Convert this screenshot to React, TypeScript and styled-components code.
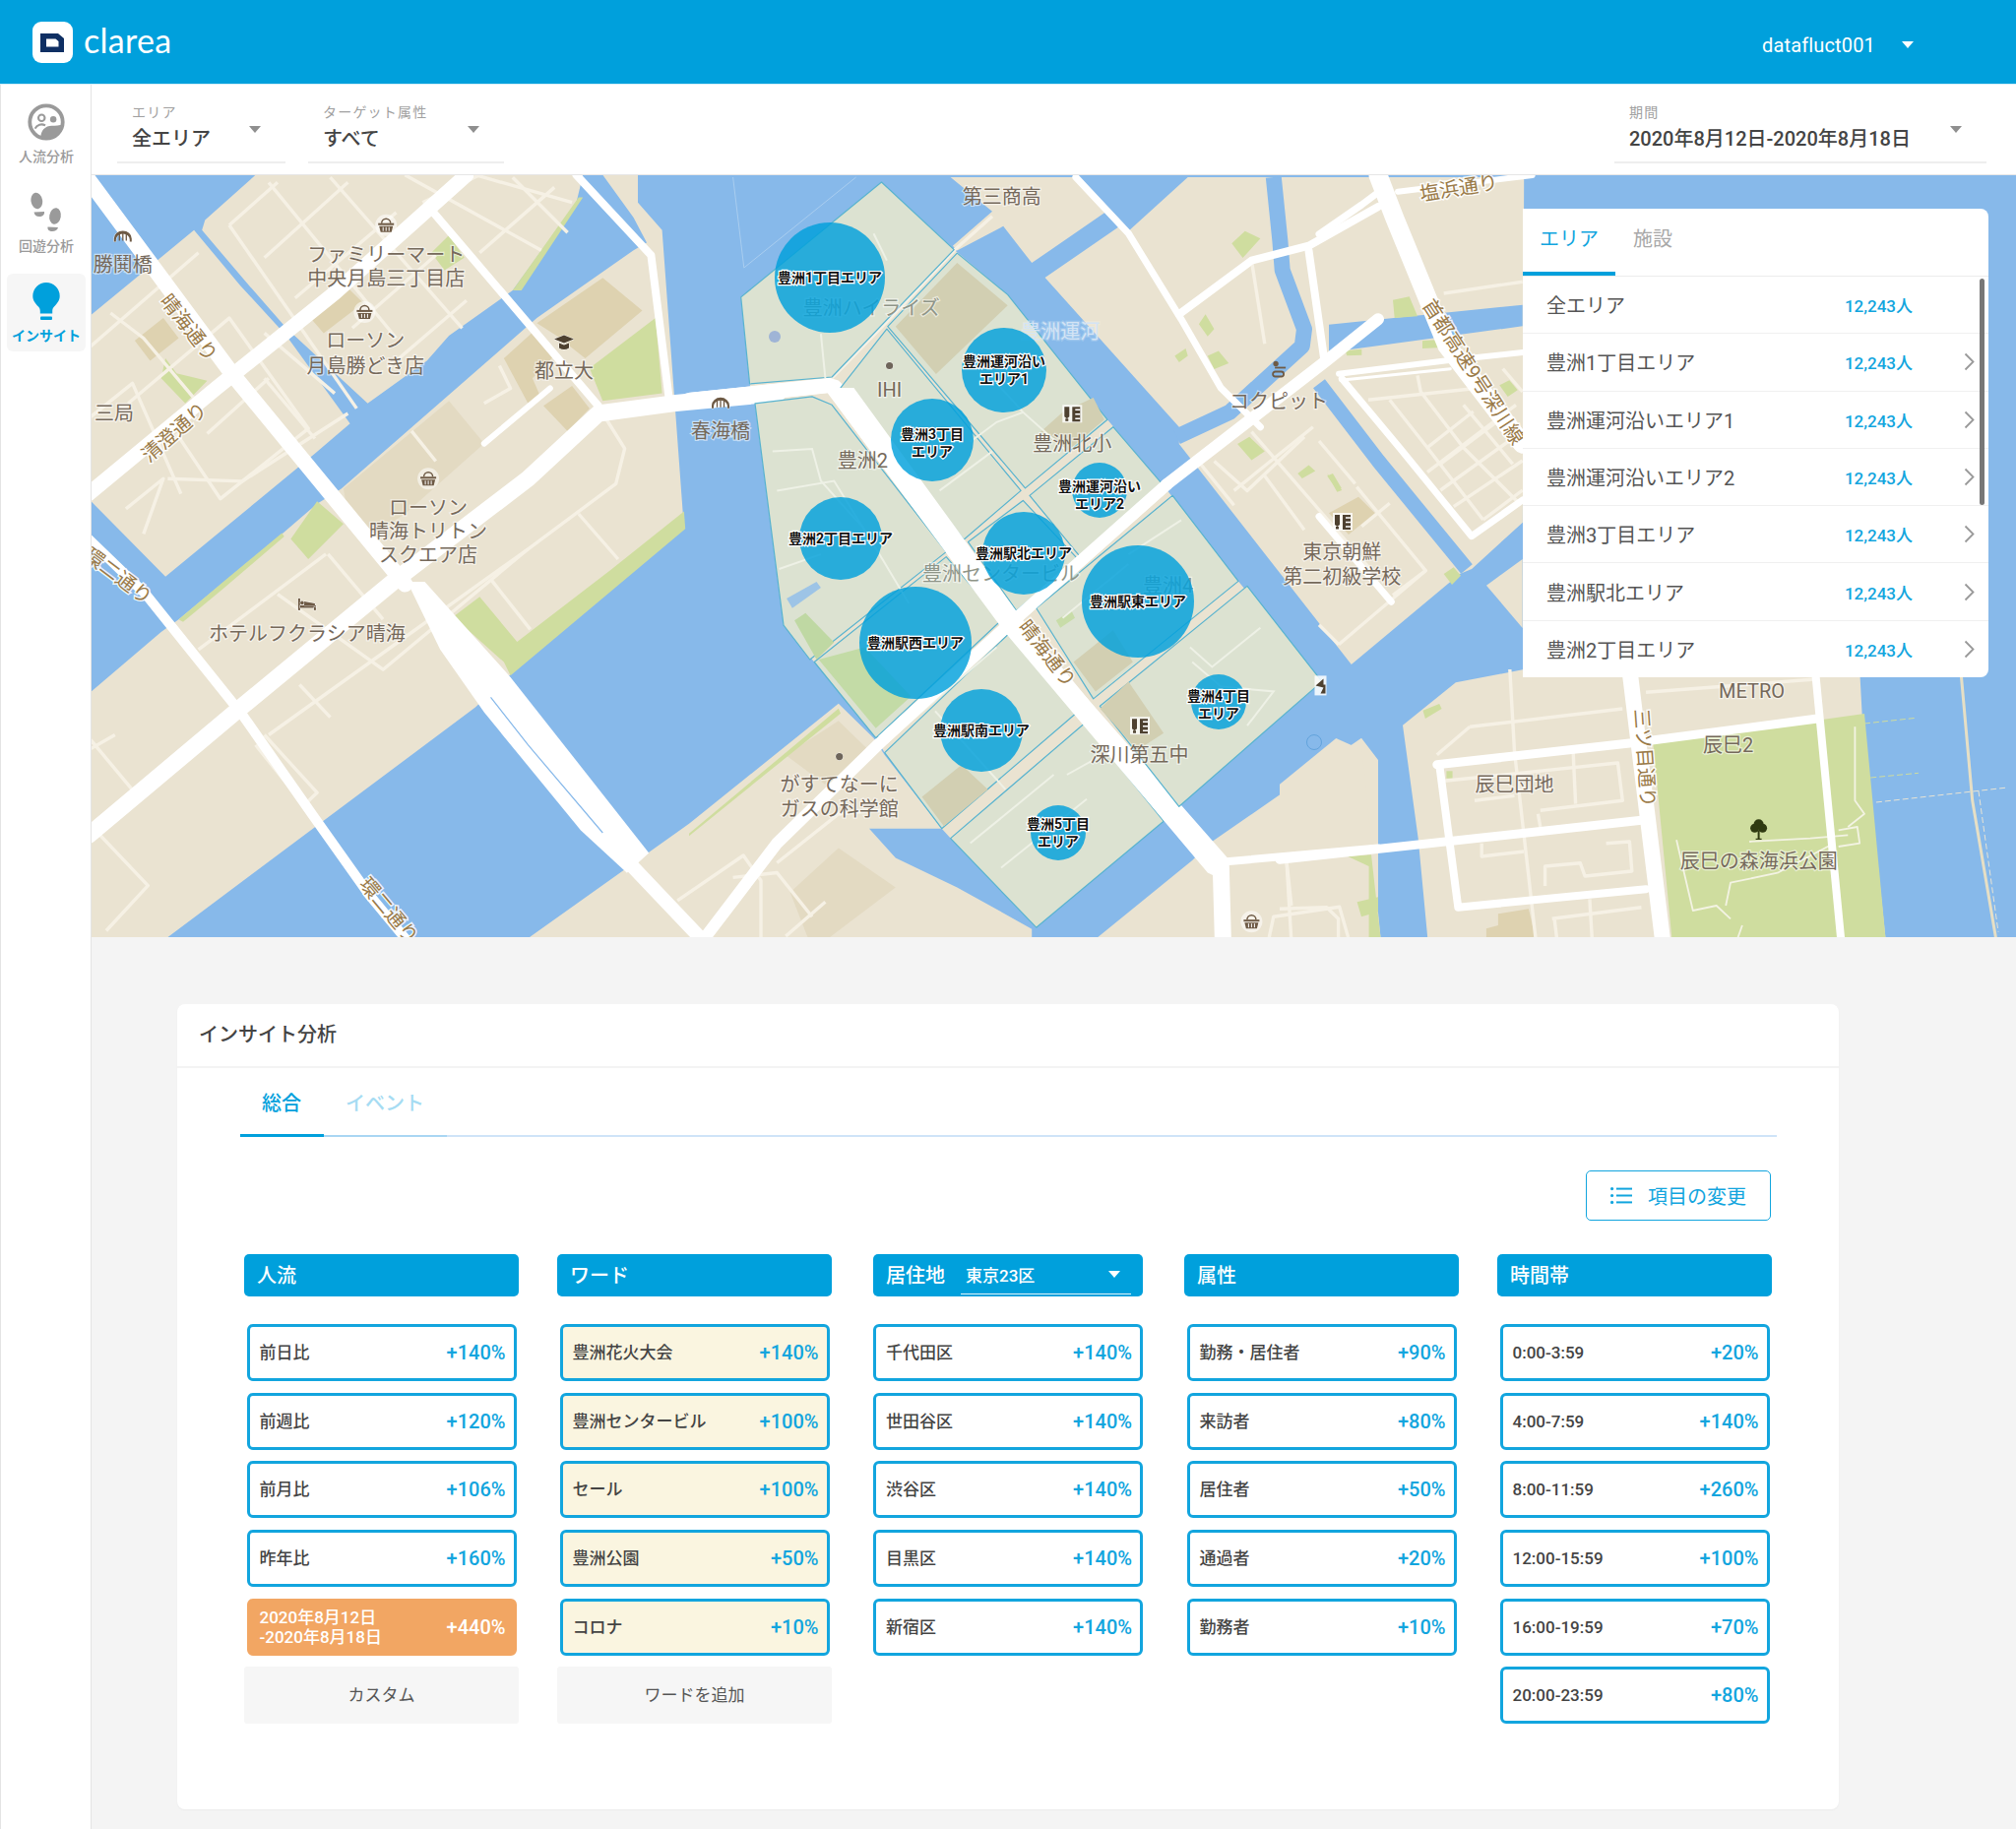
import type { FC, ReactNode } from 'react'
import styled, { createGlobalStyle } from 'styled-components'

const BLUE = '#00a0dc'
const CARD_BLUE = '#12a5de'
const FONT = `Roboto, "Noto Sans CJK JP", sans-serif`

type Frame = (x: number, y: number) => [number, number]

// map shapes were traced from crops, each list keeps the coordinates of its crop
const z3: Frame = (x, y) => [700 + x / 2.24, 180 + y / 2.01]
const z8: Frame = (x, y) => [90 + x / 2.24, 170 + y / 1.96]
const z9: Frame = (x, y) => [1300 + x / 2.096, 680 + y / 3]
const z10: Frame = (x, y) => [1340 + x / 3, 178 + y / 3]

const pts = (f: Frame, s: string) =>
	s
		.trim()
		.split(/\s+/)
		.map(p => {
			const [x, y] = p.split(',').map(Number)
			const [a, b] = f(x, y)
			return `${a.toFixed(1)},${b.toFixed(1)}`
		})
		.join(' ')

type Shape = [Frame, string]

const land: Shape[] = [
	[z8, '265,105 380,15 1125,15 1110,70 965,245 820,335 770,385 635,470 450,320 355,225 258,125'],
	[z8, '0,298 240,125 345,235 450,335 595,510 515,570 175,815 0,660'],
	[z8, '575,640 1020,300 1240,165 1270,150 1240,100 1170,15 1250,15 1250,70 1305,125 1355,720 960,1010 880,1075 180,1533 0,1533 0,1048 165,925 205,900 440,730 520,670'],
	[z3, '-363,1552 0,1320 340,1075 420,1145 445,1180 575,1330 410,1330 470,1390 610,1450 780,1535 780,1560 -363,1560'],
	[z3, '118,245 438,10 603,148 725,240 952,495 1080,630 1250,825 1440,1030 1115,1285 1080,1315 790,1532 595,1350 575,1330 445,1175 425,1145 285,990 215,915 150,462 138,422'],
	[z3, '595,0 885,0 950,70 780,175 715,100 610,150 600,140 690,70'],
	[z3, '810,205 980,100 1000,110 1135,0 1900,0 1897,705 1781,800 1754,810 1507,995 1115,545 1115,510'],
	[z3, '930,1552 1145,1395 1185,1360 1530,1145 1568,1190 1568,1552'],
	[z9, '0,350 120,210 175,245 195,525 215,820 0,820'],
	[z9, '262,170 375,40 520,0 1235,0 1240,135 1290,820 315,820 295,515'],
	[z10, '510,1250 620,1170 620,1380'],
]

const eastWater: Shape[] = [[z10, '30,455 620,395 620,460 30,540']]

const canals: Shape[] = [
	[z3, '1330,0 1345,130 1350,190 1400,310 1395,345 1230,480 1110,530'],
	[z10, '0,635 180,870 200,895 450,1200'],
]

const parks: Shape[] = [
	[z9, '795,225 1245,135 1290,820 835,820'],
	[z8, '830,895 890,855 975,945 1190,800 1355,685 1358,720 960,1012 945,985'],
	[z8, '1140,400 1290,300 1305,450 1170,465'],
	[z8, '780,170 820,135 855,180 810,205'],
	[z8, '175,380 200,410 270,425 220,470 165,420'],
	[z8, '460,740 520,665 580,710 500,780'],
	[z8, '965,245 1115,60 1125,60 985,245'],
	[z8, '205,900 300,830 440,728 445,735 305,840 215,905'],
	[z3, '0,1340 340,1085 345,1095 0,1345'],
	[z3, '1160,300 1175,280 1195,310 1180,325'],
	[z3, '1235,135 1265,110 1300,125 1260,165'],
	[z3, '1105,365 1130,350 1135,365 1115,378'],
	[z3, '1180,365 1205,355 1228,380 1195,392'],
	[z3, '1248,545 1275,530 1310,560 1280,578'],
	[z3, '1385,605 1410,588 1425,600 1395,615'],
	[z3, '1452,610 1465,605 1485,635 1475,640'],
	[z3, '1520,1480 1568,1470 1568,1500 1530,1510'],
	[z10, '225,380 275,370 300,430 230,435'],
	[z10, '315,505 375,500 375,525 315,528'],
	[z10, '80,535 130,530 130,548 85,550'],
	[z10, '550,640 580,625 605,655 575,675'],
	[z10, '380,1215 410,1195 432,1220 405,1248'],
	[z10, '25,910 45,930 70,960 55,965'],
	[z9, '355,310 368,310 368,332 355,332'],
	[z9, '305,125 340,105 345,120 310,150'],
	[z9, '145,570 195,565 215,820 190,820 190,600'],
]

const blocks: Shape[] = [
	[z8, '105,345 170,300 205,340 140,385'],
	[z8, '505,300 590,240 625,270 535,330'],
	[z8, '945,380 1015,325 1060,375 1010,420 1030,460 1000,470'],
	[z8, '1020,310 1170,220 1260,285 1130,380 1065,335'],
	[z8, '1035,475 1100,435 1140,480 1090,525'],
	[z9, '440,820 440,790 465,780 465,745 530,730 545,820'],
	[z10, '30,1030 120,980 170,1030 90,1095'],
]

const paleBlocks: Shape[] = [
	[z8, '580,640 820,465 900,550 720,690 630,740 590,690'],
	[z3, '220,1180 340,1110 420,1180 310,1240'],
	[z3, '230,1460 340,1370 470,1450 320,1552 270,1552'],
]

const toyosuAreas = [
	'118,245 438,10 603,148 325,408 138,422',
	'610,155 725,240 952,495 765,635 452,305',
	'450,310 755,640 625,740 345,430',
	'150,462 280,448 325,465 585,765 275,985 215,915',
	'965,510 1080,630 890,775 775,650',
	'760,660 885,780 745,885 635,745',
	'585,775 710,905 425,1145 285,990',
	'1100,650 1250,825 920,1065 790,880',
	'1270,835 1440,1030 1115,1285 935,1080',
	'730,930 880,1095 575,1330 445,1175',
	'900,1115 1080,1315 790,1532 595,1350',
]

const toyosuBlocks = [
	'470,305 610,175 725,262 562,402',
	'800,520 850,480 920,450 945,495 860,560',
	'875,990 965,925 1010,990 925,1050',
	'935,1085 1000,1030 1080,1135 1020,1170',
	'530,1265 620,1200 680,1250 580,1325',
]

const toyosuPaths = [
	'190,560 280,555 300,620 400,720',
	'200,640 330,620 440,780 500,870',
	'205,800 300,770',
	'300,320 310,410',
	'450,170 420,115',
	'640,540 700,500 760,480 860,560',
	'760,480 700,420',
	'570,640 690,560',
	'1140,960 1190,1000 1300,920',
	'1145,990 1210,1040 1330,1050 1270,1120',
	'710,1410 905,1270',
	'860,1220 960,1170',
	'640,1360 830,1220',
	'1000,770 1120,700',
	'850,900 1000,790',
	'480,1130 700,960',
	'560,1090 720,1250',
]

type Road = [Frame, string, number]

const roads: Road[] = [
	[z8, '0,25 330,415 720,830', 16],
	[z8, '0,650 290,440 560,250 860,15', 15],
	[z8, '0,1330 340,1080 700,820 1000,620 1160,490 1330,470 1568,450', 17],
	[z8, '780,85 1160,475', 8],
	[z8, '1110,15 1280,175 1320,455', 8],
	[z8, '0,740 130,850 350,1090 510,1290 640,1450 725,1540', 10],
	[z8, '900,550 1050,440', 6],
	[z8, '1230,1385 1420,1560', 14],
	[z3, '0,455 320,425', 15],
	[z3, '330,430 720,900 1210,1400 1215,1560', 17],
	[z3, '30,1560 200,1360 440,1150 720,920 1090,625 1450,375 1568,290', 12],
	[z3, '880,0 1000,115 1120,290 1210,430 1300,510', 7],
	[z3, '1115,280 1280,170 1410,140 1568,60', 8],
	[z3, '1410,150 1445,370', 8],
	[z10, '180,0 230,130 390,520 620,820', 19],
	[z10, '60,605 390,565 620,540', 6],
	[z10, '65,625 400,590', 3],
	[z10, '70,620 245,830 465,1100 620,990', 7],
	[z10, '0,180 130,90 190,45', 7],
	[z10, '240,50 650,0', 6],
	[z10, '0,1040 220,1300', 7],
	[z3, '1190,1400 1568,1370', 8],
	[z9, '0,580 770,460', 9],
	[z9, '745,0 815,820', 16],
	[z9, '1140,0 1150,150 1195,820', 8],
	[z9, '335,290 745,225 1145,150', 9],
	[z9, '340,290 380,725 780,670', 8],
]

type Lane = [Frame, string]

const lanes: Lane[] = [
	[z8, '320,115 430,30'],
	[z8, '320,115 610,480'],
	[z8, '400,180 590,30'],
	[z8, '470,260 700,90'],
	[z8, '600,320 790,175'],
	[z8, '680,400 860,265'],
	[z8, '760,70 890,15'],
	[z8, '890,170 1060,40'],
	[z8, '410,30 700,340'],
	[z8, '550,20 850,320'],
	[z8, '720,15 1030,165'],
	[z8, '880,15 1100,70'],
	[z8, '965,20 1090,130'],
	[z8, '50,290 125,340 250,470'],
	[z8, '0,360 250,170'],
	[z8, '90,470 320,300 500,520 300,660 200,530'],
	[z8, '0,500 100,430 210,650'],
	[z8, '85,680 170,620 125,730'],
	[z8, '270,530 410,420'],
	[z8, '400,420 515,540'],
	[z8, '180,620 350,625 590,490'],
	[z8, '400,330 560,450'],
	[z8, '60,1130 0,1160'],
	[z8, '5,1140 110,1250'],
	[z8, '40,1520 135,1430 5,1310'],
	[z8, '380,1150 490,1270 520,1245 400,1130'],
	[z8, '410,1130 1000,760 1200,630 1220,560 1170,490'],
	[z8, '350,1090 920,680'],
	[z8, '480,1030 550,1095'],
	[z8, '250,960 540,770'],
	[z8, '430,850 670,1000 1000,760'],
	[z8, '545,770 670,900'],
	[z8, '915,820 1005,920'],
	[z8, '1115,690 1205,780'],
	[z8, '1340,1460 1490,1370 1530,1420 1530,1533'],
	[z8, '935,395 960,440 900,470'],
	[z8, '735,525 790,585'],
	[z3, '200,1400 340,1300 470,1290'],
	[z3, '220,1550 310,1480'],
	[z3, '100,1430 200,1420 280,1510'],
	[z3, '1195,580 1270,640 1400,530'],
	[z3, '1280,520 1550,800'],
	[z3, '1310,610 1400,720'],
	[z3, '1240,640 1420,510'],
	[z3, '1150,570 1240,670'],
	[z3, '1320,1552 1330,1510 1480,1490 1500,1552'],
	[z3, '1360,1400 1370,1552'],
	[z3, '325,410 450,295 605,148 690,80'],
	[z3, '1280,170 1310,340'],
	[z10, '150,685 470,650'],
	[z10, '300,610 310,660 440,830 610,1000'],
	[z10, '215,685 330,830 500,1050'],
	[z10, '330,830 470,720'],
	[z10, '370,880 550,745'],
	[z10, '330,905 600,700'],
	[z10, '370,960 620,780'],
	[z10, '410,1010 620,870'],
	[z10, '500,1050 620,960'],
	[z10, '440,700 590,880'],
	[z10, '560,590 620,660'],
	[z10, '380,360 620,325'],
	[z10, '115,950 325,1205 60,1430'],
	[z10, '130,1070 215,1000'],
	[z10, '225,1280 325,1205'],
	[z10, '0,810 110,940'],
	[z10, '0,1370 60,1430'],
	[z9, '490,0 500,250 545,820'],
	[z9, '350,340 720,285 730,400 555,430'],
	[z9, '405,175 335,260'],
	[z9, '405,175 730,120'],
	[z9, '625,255 630,410'],
	[z9, '430,530 430,570 520,555'],
	[z9, '695,530 745,525 750,615 650,630 640,590 565,600 565,660'],
	[z9, '550,440 555,480'],
	[z9, '415,400 500,385'],
	[z9, '580,760 770,725'],
	[z9, '585,760 590,820'],
	[z9, '780,70 1140,30'],
	[z9, '15,590 25,720'],
	[z9, '0,730 100,725 125,760 125,820'],
	[z9, '660,700 665,820'],
]

const parkPaths: string[] = [
	'845,520 880,735 930,720 960,760',
	'950,720 960,650 1060,620 1180,530',
	'1000,525 1130,515 1210,505',
	'1225,175 1225,400 1245,440 1210,480',
	'1190,490 1230,480 1235,530 1190,540',
	'975,820 985,780',
]

type Bubble = { x: number; y: number; r: number; dy?: number; lines: string[] }

const bubbles: Bubble[] = [
	{ x: 843, y: 282, r: 56, lines: ['豊洲1丁目エリア'] },
	{ x: 1020, y: 376, r: 43, lines: ['豊洲運河沿い', 'エリア1'] },
	{ x: 947, y: 447, r: 42, dy: 3, lines: ['豊洲3丁目', 'エリア'] },
	{ x: 854, y: 547, r: 42, lines: ['豊洲2丁目エリア'] },
	{ x: 1117, y: 498, r: 28, dy: 5, lines: ['豊洲運河沿い', 'エリア2'] },
	{ x: 1040, y: 562, r: 42, lines: ['豊洲駅北エリア'] },
	{ x: 930, y: 653, r: 57, lines: ['豊洲駅西エリア'] },
	{ x: 1156, y: 611, r: 57, lines: ['豊洲駅東エリア'] },
	{ x: 997, y: 742, r: 42, lines: ['豊洲駅南エリア'] },
	{ x: 1238, y: 713, r: 28, dy: 3, lines: ['豊洲4丁目', 'エリア'] },
	{ x: 1075, y: 846, r: 28, lines: ['豊洲5丁目', 'エリア'] },
]

type PlaceName = { f: Frame; x: number; y: number; t: string; soft?: boolean; faint?: boolean }

const places: PlaceName[] = [
	{ f: z8, x: 78, y: 195, t: '勝鬨橋' },
	{ f: z8, x: 677, y: 175, t: 'ファミリーマート' },
	{ f: z8, x: 677, y: 222, t: '中央月島三丁目店' },
	{ f: z8, x: 630, y: 345, t: 'ローソン' },
	{ f: z8, x: 630, y: 395, t: '月島勝どき店' },
	{ f: z8, x: 1082, y: 405, t: '都立大' },
	{ f: z8, x: 58, y: 490, t: '三局' },
	{ f: z8, x: 1438, y: 525, t: '春海橋' },
	{ f: z8, x: 773, y: 678, t: 'ローソン' },
	{ f: z8, x: 773, y: 726, t: '晴海トリトン' },
	{ f: z8, x: 773, y: 773, t: 'スクエア店' },
	{ f: z8, x: 497, y: 930, t: 'ホテルフクラシア晴海' },
	{ f: z3, x: 712, y: 40, t: '第三商高' },
	{ f: z3, x: 415, y: 268, t: '豊洲ハイライズ', soft: true },
	{ f: z3, x: 845, y: 315, t: '豊洲運河', faint: true },
	{ f: z3, x: 456, y: 435, t: 'IHI' },
	{ f: z3, x: 872, y: 545, t: '豊洲北小' },
	{ f: z3, x: 395, y: 578, t: '豊洲2' },
	{ f: z3, x: 710, y: 810, t: '豊洲センタービル', soft: true },
	{ f: z3, x: 1090, y: 835, t: '豊洲4', soft: true },
	{ f: z3, x: 1025, y: 1180, t: '深川第五中' },
	{ f: z3, x: 342, y: 1240, t: 'がすてなーに' },
	{ f: z3, x: 342, y: 1290, t: 'ガスの科学館' },
	{ f: z3, x: 1342, y: 458, t: 'コクピット' },
	{ f: z10, x: 70, y: 1150, t: '東京朝鮮' },
	{ f: z10, x: 70, y: 1224, t: '第二初級学校' },
	{ f: z9, x: 1005, y: 67, t: 'METRO' },
	{ f: z9, x: 955, y: 230, t: '辰巳2' },
	{ f: z9, x: 500, y: 350, t: '辰巳団地' },
	{ f: z9, x: 1020, y: 585, t: '辰巳の森海浜公園' },
]

const roadNames: { x: number; y: number; a: number; t: string; start?: boolean }[] = [
	{ x: 192, y: 333, a: 52, t: '晴海通り' },
	{ x: 177, y: 439, a: -41, t: '清澄通り' },
	{ x: 120, y: 585, a: 37, t: '環二通り' },
	{ x: 395, y: 925, a: 50, t: '環二通り' },
	{ x: 1064, y: 664, a: 52, t: '晴海通り' },
	{ x: 1482, y: 191, a: -9, t: '塩浜通り' },
	{ x: 1671, y: 770, a: 86, t: '三ツ目通り' },
	{ x: 1450, y: 306, a: 57, t: '首都高速9号深川線', start: true },
]

const GlobalStyle = createGlobalStyle`
	html, body {
		margin: 0;
		padding: 0;
		width: 2048px;
		height: 1858px;
		overflow: hidden;
		background: #f4f4f4;
		font-family: ${FONT};
	}
`

const Page = styled.div`
	width: 2048px;
	height: 1858px;
	display: flex;
	flex-direction: column;
`

const Header = styled.header`
	height: 86px;
	flex: none;
	display: flex;
	align-items: center;
	background: ${BLUE};
	border-bottom: 1px solid #d5eef8;
	padding: 0 104px 0 33px;
	box-sizing: border-box;
`

const LogoMark = styled.svg`
	width: 41px;
	height: 42px;
	display: block;
`

const LogoText = styled.span`
	margin: -3px 0 0 11px;
	font-family: Lato, sans-serif;
	font-size: 34px;
	font-weight: 400;
	letter-spacing: 0.3px;
	line-height: 42px;
	color: #fff;
`

const UserMenu = styled.div`
	margin-left: auto;
	padding-top: 6px;
	display: flex;
	align-items: center;
	gap: 27px;
	color: #fff;
	font-size: 20px;
	letter-spacing: 0.15px;
`

const Caret = styled.span<{ $color?: string }>`
	display: inline-block;
	width: 0;
	height: 0;
	flex: none;
	border-left: 6.5px solid transparent;
	border-right: 6.5px solid transparent;
	border-top: 7px solid ${p => p.$color ?? '#8f8f8f'};
`

const Body = styled.div`
	flex: 1;
	display: flex;
	min-height: 0;
`

const Sidebar = styled.nav`
	width: 93px;
	flex: none;
	box-sizing: border-box;
	background: #fff;
	border-left: 1px solid #e4e4e4;
	border-right: 1px solid #e4e4e4;
	padding: 10px 5px 0 6px;
	display: flex;
	flex-direction: column;
	gap: 12px;
`

const SideItem = styled.div<{ $active?: boolean }>`
	height: 79px;
	box-sizing: border-box;
	padding-top: 9px;
	border-radius: 6px;
	display: flex;
	flex-direction: column;
	align-items: center;
	background: ${p => (p.$active ? '#f6f6f6' : 'transparent')};
`

const SideIcon = styled.div`
	height: 38px;
	display: flex;
	align-items: center;
	justify-content: center;
`

const SideLabel = styled.span<{ $active?: boolean }>`
	margin-top: 8px;
	font-size: 14px;
	line-height: 16px;
	white-space: nowrap;
	font-weight: ${p => (p.$active ? 700 : 500)};
	color: ${p => (p.$active ? BLUE : '#9a9a9a')};
`

const Main = styled.main`
	flex: 1;
	min-width: 0;
	display: flex;
	flex-direction: column;
	background: #f4f4f4;
`

const Toolbar = styled.div`
	height: 91px;
	flex: none;
	box-sizing: content-box;
	display: flex;
	background: #fff;
	border-bottom: 1px solid #e6e6e6;
	padding-left: 26px;
	padding-right: 30px;
	gap: 23px;
`

const Filter = styled.div<{ $w: number; $push?: boolean }>`
	width: ${p => p.$w}px;
	height: 61px;
	margin-top: 19px;
	margin-left: ${p => (p.$push ? 'auto' : 0)};
	box-sizing: border-box;
	padding: 0 25px 0 15px;
	border-bottom: 2px solid #eeeeee;
	display: flex;
	justify-content: space-between;
`

const FilterLabel = styled.div`
	font-size: 14px;
	line-height: 18px;
	letter-spacing: 1.2px;
	color: #a0a0a0;
`

const FilterValue = styled.div`
	font-size: 20px;
	line-height: 30px;
	font-weight: 500;
	color: #444;
	margin-top: 3px;
	white-space: nowrap;
`

const FilterCaret = styled(Caret)`
	margin-top: 23px;
`

const MapArea = styled.section`
	position: relative;
	height: 774px;
	flex: none;
	overflow: hidden;
`

const MapSvg = styled.svg`
	display: block;
	width: 1955px;
	height: 774px;
`

const PlaceText = styled.text<{ $fill?: string; $halo?: string }>`
	font-family: ${FONT};
	font-size: 20px;
	text-anchor: middle;
	fill: ${p => p.$fill ?? '#75695b'};
	stroke: ${p => p.$halo ?? 'rgba(255, 255, 255, 0.55)'};
	stroke-width: 2.5px;
	paint-order: stroke;
`

const RoadText = styled.text`
	font-family: ${FONT};
	font-size: 20px;
	fill: #9a7a48;
	stroke: rgba(255, 255, 255, 0.85);
	stroke-width: 3px;
	paint-order: stroke;
`

const BubbleText = styled.text`
	font-family: ${FONT};
	font-size: 14px;
	font-weight: 700;
	text-anchor: middle;
	fill: #111;
	stroke: #fff;
	stroke-width: 2.5px;
	paint-order: stroke;
`

const AreaPanel = styled.aside`
	position: absolute;
	top: 34px;
	right: 28px;
	width: 473px;
	height: 476px;
	background: #fff;
	border-radius: 0 8px 8px 0;
	overflow: hidden;
`

const PanelTabs = styled.div`
	height: 68px;
	display: flex;
	border-bottom: 1px solid #ececec;
`

const PanelTab = styled.div<{ $active?: boolean }>`
	height: 68px;
	box-sizing: border-box;
	padding-top: 16px;
	font-size: 20px;
	line-height: 30px;
	text-align: center;
	width: ${p => (p.$active ? '94px' : 'auto')};
	margin-left: ${p => (p.$active ? 0 : '18px')};
	color: ${p => (p.$active ? '#12a5de' : '#a8a8a8')};
	border-bottom: ${p => (p.$active ? `4px solid ${BLUE}` : 'none')};
`

const AreaList = styled.div`
	position: relative;
`

const AreaRow = styled.div`
	height: 58.3px;
	box-sizing: border-box;
	display: flex;
	align-items: center;
	padding-left: 24px;
	border-bottom: 1.5px solid #f0f0f0;
`

const AreaName = styled.span`
	flex: 1;
	font-size: 20px;
	color: #555;
`

const AreaCount = styled.span`
	width: 70px;
	text-align: right;
	font-size: 17px;
	font-weight: 500;
	color: ${CARD_BLUE};
`

const AreaChevron = styled.span`
	width: 77px;
	flex: none;
	display: flex;
	padding-left: 52px;
	box-sizing: border-box;
`

const ScrollThumb = styled.div`
	position: absolute;
	top: 2px;
	right: 4px;
	width: 5px;
	height: 230px;
	border-radius: 3px;
	background: #777;
`

const Content = styled.div`
	margin: 68px 0 0 87px;
	width: 1688px;
	height: 818px;
	background: #fff;
	border-radius: 8px;
	box-shadow: 0 1px 2px rgba(0, 0, 0, 0.04);
	flex: none;
`

const PanelTitle = styled.div`
	height: 65px;
	box-sizing: border-box;
	padding-left: 22px;
	border-bottom: 2px solid #f3f3f3;
	font-size: 20px;
	font-weight: 500;
	line-height: 63px;
	color: #444;
`

const TabBar = styled.div`
	margin-left: 63.5px;
	width: 1561.5px;
	height: 70px;
	box-sizing: border-box;
	display: flex;
	border-bottom: 2px solid #cfe4f8;
`

const ViewTab = styled.div<{ $active?: boolean }>`
	width: ${p => (p.$active ? 85 : 125)}px;
	height: 70px;
	box-sizing: border-box;
	text-align: center;
	font-size: 20px;
	font-weight: 500;
	line-height: 72px;
	color: ${p => (p.$active ? BLUE : '#a6dcf3')};
	border-bottom: ${p => (p.$active ? `3px solid ${BLUE}` : '2px solid #a9d6f3')};
`

const ActionRow = styled.div`
	margin-top: 34px;
	padding-right: 69px;
	display: flex;
	justify-content: flex-end;
`

const OutlineButton = styled.div`
	width: 188px;
	height: 51px;
	box-sizing: border-box;
	border: 1.5px solid ${CARD_BLUE};
	border-radius: 5px;
	display: flex;
	align-items: center;
	justify-content: center;
	gap: 16px;
	font-size: 20px;
	color: ${CARD_BLUE};
`

const Columns = styled.div`
	margin: 34px 0 0 68px;
	display: flex;
	gap: 39px;
`

const Column = styled.div<{ $narrow?: boolean }>`
	width: ${p => (p.$narrow ? 274 : 279)}px;
	margin: ${p => (p.$narrow ? '0 3px' : 0)};
	flex: none;
`

const ColumnHead = styled.div`
	height: 43px;
	box-sizing: border-box;
	background: ${BLUE};
	border-radius: 5px;
	padding: 0 0 2px 13px;
	display: flex;
	align-items: center;
	color: #fff;
	font-size: 20px;
	font-weight: 500;
`

const HeadSelect = styled.div`
	margin: 2px 0 0 16px;
	width: 173px;
	height: 38px;
	box-sizing: border-box;
	padding: 0 11px 2px 5px;
	border-bottom: 1.5px solid #e3f4fb;
	display: flex;
	align-items: center;
	justify-content: space-between;
	font-size: 17px;
`

const Stack = styled.div`
	margin-top: 28px;
	display: flex;
	flex-direction: column;
	align-items: center;
	gap: 11.7px;
`

const Card = styled.div<{ $tone?: 'word' | 'date' }>`
	width: 274px;
	height: 58px;
	box-sizing: border-box;
	border-radius: 6px;
	padding: 0 8px 0 10px;
	display: flex;
	align-items: center;
	justify-content: space-between;
	border: 3px solid ${p => (p.$tone === 'date' ? '#f2a663' : CARD_BLUE)};
	background: ${p => (p.$tone === 'word' ? '#faf5e0' : p.$tone === 'date' ? '#f2a663' : '#fff')};
`

const CardName = styled.span<{ $light?: boolean }>`
	font-size: 17px;
	line-height: 20px;
	font-weight: 500;
	white-space: pre-line;
	color: ${p => (p.$light ? '#fff' : '#444')};
`

const CardValue = styled.span<{ $light?: boolean }>`
	font-size: 20px;
	font-weight: 500;
	color: ${p => (p.$light ? '#fff' : CARD_BLUE)};
`

const AddButton = styled.div`
	width: 279px;
	height: 58px;
	border-radius: 3px;
	background: #f6f6f6;
	display: flex;
	align-items: center;
	justify-content: center;
	padding-bottom: 3px;
	box-sizing: border-box;
	font-size: 17px;
	color: #555;
`

const Polys: FC<{ list: Shape[]; fill: string }> = ({ list, fill }) => (
	<g fill={fill}>
		{list.map(([f, s], i) => (
			<polygon key={i} points={pts(f, s)} />
		))}
	</g>
)

const ICON = '#6e5a45'

const At: FC<{ f: Frame; x: number; y: number; children: ReactNode }> = ({ f, x, y, children }) => {
	const [a, b] = f(x, y)
	return <g transform={`translate(${a.toFixed(1)} ${b.toFixed(1)})`}>{children}</g>
}

const BasketIcon: FC = () => (
	<g>
		<circle r="11" fill="#fff" opacity="0.55" />
		<path d="M-4.5 -2 A4.5 4.5 0 0 1 4.5 -2" fill="none" stroke={ICON} strokeWidth="1.5" />
		<rect x="-8" y="-2" width="16" height="2" fill={ICON} />
		<path d="M-7 1 H7 L5.5 7 H-5.5 Z" fill={ICON} />
		<path d="M-3 2 V6 M0 2 V6 M3 2 V6" stroke="#fff" strokeWidth="1" />
	</g>
)

const BridgeIcon: FC = () => (
	<g>
		<path d="M-9 5 V2 A9 8 0 0 1 9 2 V5 H7 V3 A7 6 0 0 0 -7 3 V5 Z" fill={ICON} stroke="#fff" strokeWidth="0.8" paintOrder="stroke" />
		<path d="M-3.5 -3 V4 M0 -4 V4 M3.5 -3 V4" stroke={ICON} strokeWidth="1.3" />
	</g>
)

const SchoolIcon: FC = () => (
	<g>
		<rect x="-10" y="-9" width="20" height="18" fill="#fff" opacity="0.8" />
		<path d="M-8 -7 H-3 V3 L-5.5 5 L-8 3 Z" fill="#4e4130" />
		<rect x="-7" y="5" width="3" height="2.5" fill="#4e4130" />
		<path d="M0 -7 H8 V8 H0 Z" fill="#4e4130" />
		<path d="M3 -4 H8 M3 0.5 H8 M3 5 H8" stroke="#fff" strokeWidth="1.4" />
	</g>
)

const GradIcon: FC = () => (
	<g fill="#4e4130" stroke="#fff" strokeWidth="1" paintOrder="stroke">
		<path d="M-10 -3 L0 -7 L10 -3 L0 1 Z" />
		<path d="M-5 1 L0 3 L5 1 V6 Q0 9 -5 6 Z" />
	</g>
)

const BedIcon: FC = () => (
	<g fill={ICON} stroke="#fff" strokeWidth="0.8" paintOrder="stroke">
		<rect x="-9" y="-6" width="2" height="12" />
		<rect x="-7" y="1" width="16" height="2.6" />
		<rect x="7" y="3" width="2" height="3" />
		<path d="M-3 -3 L8 -1 V1 H-3 Z" />
		<circle cx="-5" cy="-1.5" r="1.8" />
	</g>
)

const TreeIcon: FC = () => (
	<g fill="#2f3a10">
		<circle cx="0" cy="-6" r="5" />
		<circle cx="-4" cy="-2" r="4.5" />
		<circle cx="4" cy="-2" r="4.5" />
		<rect x="-1" y="0" width="2" height="9" />
		<rect x="-3" y="8.5" width="6" height="1.2" />
	</g>
)

const CockpitIcon: FC = () => (
	<g fill="none" stroke={ICON} strokeWidth="1.8">
		<circle cx="-3" cy="-7" r="1.8" fill={ICON} />
		<path d="M-4 -3 H7" />
		<rect x="-6" y="1" width="11" height="5" rx="2.5" />
	</g>
)

const PierIcon: FC = () => (
	<g>
		<rect x="-6" y="-10" width="12" height="20" fill="#fff" opacity="0.85" />
		<path d="M-5 0 L3 -7 V-1 L5 -1 V8 H0 L3 2 Z" fill="#4e4130" />
	</g>
)

const MapDot: FC<{ f: Frame; x: number; y: number }> = ({ f, x, y }) => (
	<At f={f} x={x} y={y}>
		<circle r="3.6" fill="#6e655a" stroke="#fff" strokeWidth="1" paintOrder="stroke" />
	</At>
)

const AreaMap: FC = () => (
	<MapSvg viewBox="93 178 1955 774">
		<rect x="93" y="178" width="1955" height="774" fill="#87b9ea" />
		<Polys list={land} fill="#eae3d1" />
		<Polys list={eastWater} fill="#87b9ea" />
		<g fill="none" stroke="#87b9ea" strokeLinejoin="round">
			{canals.map(([f, s], i) => (
				<polyline key={i} points={pts(f, s)} strokeWidth={i === 0 ? 16 : 15} />
			))}
		</g>
		<Polys list={paleBlocks} fill="#e3dac2" />
		<Polys list={blocks} fill="#ded2b0" />
		<Polys list={parks} fill="#cfdd9f" />
		<g fill="none" stroke="#f6f1e5" strokeWidth="3.4" strokeLinejoin="round">
			{lanes.map(([f, s], i) => (
				<polyline key={i} points={pts(f, s)} />
			))}
		</g>
		<g fill="none" stroke="#f3f3e3" strokeWidth="1.8" strokeLinejoin="round">
			{parkPaths.map((s, i) => (
				<polyline key={i} points={pts(z9, s)} />
			))}
		</g>
		<polyline points={pts(z9, '1450,0 1475,400 1525,820')} fill="none" stroke="#e6dfc5" strokeWidth="3" />
		<g fill="none" stroke="#cfdd9f" strokeWidth="1" strokeDasharray="6 3">
			<polyline points={pts(z9, '1245,165 1355,148')} />
			<polyline points={pts(z9, '1258,330 1360,316')} />
		</g>
		<g fill="none" stroke="#e8e4d5" strokeWidth="1" strokeDasharray="6 3">
			<polyline points={pts(z9, '1270,405 1550,360')} />
			<polyline points={pts(z9, '1488,370 1530,800')} />
		</g>
		<polyline points={pts(z3, '100,0 125,185 380,0')} fill="none" stroke="#a9cdef" strokeWidth="1" />
		<g fill="none" stroke="#fff" strokeLinejoin="round" strokeLinecap="round">
			{roads.map(([f, s, w], i) => (
				<polyline key={i} points={pts(f, s)} strokeWidth={w} />
			))}
		</g>
		<polygon points={pts(z8, '725,825 765,825 960,1015 1275,1365 1225,1405 1120,1320 900,1085 800,960')} fill="#fff" />
		<polyline points={pts(z8, '915,1055 1000,1150 1170,1325')} fill="none" stroke="#87b9ea" strokeWidth="1.2" />
		<g fill="#dce2d1" stroke="#58b3cf" strokeWidth="1.2" strokeLinejoin="round">
			{toyosuAreas.map((s, i) => (
				<polygon key={i} points={pts(z3, s)} />
			))}
		</g>
		<g fill="#d2cfb2">
			{toyosuBlocks.map((s, i) => (
				<polygon key={i} points={pts(z3, s)} />
			))}
		</g>
		<polygon points={pts(z3, '240,905 265,890 330,950 290,985')} fill="#bfd8a3" />
		<polygon points={pts(z3, '295,985 400,960 505,1060 425,1125')} fill="#c3dba6" />
		<polygon points={pts(z3, '835,905 870,885 878,900 845,920')} fill="#c8dca8" />
		<g fill="none" stroke="#eef1e6" strokeWidth="2">
			{toyosuPaths.map((s, i) => (
				<polyline key={i} points={pts(z3, s)} />
			))}
		</g>
		<polygon points={pts(z3, '222,860 290,826 300,838 235,880')} fill="#9dc4e6" />
		<polygon points={pts(z3, '330,430 375,430 760,905 1215,1400 1215,1435 1180,1420 715,925 340,470')} fill="#fff" />
		<polyline points={pts(z3, '440,1150 720,920 1090,625')} fill="none" stroke="#fff" strokeWidth="12" />
		<polyline points={pts(z3, '0,455 325,425')} fill="none" stroke="#fff" strokeWidth="15" />
		<circle cx="787" cy="342" r="6" fill="#9fb4d6" />
		<circle cx="1335" cy="754" r="7.5" fill="none" stroke="#62a3dc" strokeWidth="1" />

		{places.map(({ f, x, y, t, soft, faint }, i) => {
			const [a, b] = f(x, y)
			return (
				<PlaceText
					key={i}
					x={a}
					y={b + 7}
					$fill={faint ? '#d4e4f5' : soft ? '#8f9588' : undefined}
					$halo={faint ? 'rgba(255,255,255,0.2)' : undefined}
				>
					{t}
				</PlaceText>
			)
		})}
		{roadNames.map(({ x, y, a, t, start }, i) => (
			<RoadText key={i} x={x} y={y + 7} textAnchor={start ? 'start' : 'middle'} transform={`rotate(${a} ${x} ${y})`}>
				{t}
			</RoadText>
		))}

		<At f={z8} x={677} y={115}><BasketIcon /></At>
		<At f={z8} x={628} y={288}><BasketIcon /></At>
		<At f={z8} x={773} y={620}><BasketIcon /></At>
		<At f={z3} x={1280} y={1520}><BasketIcon /></At>
		<At f={z8} x={1082} y={348}><GradIcon /></At>
		<At f={z8} x={497} y={870}><BedIcon /></At>
		<At f={z8} x={78} y={138}><BridgeIcon /></At>
		<At f={z8} x={1438} y={470}><BridgeIcon /></At>
		<At f={z3} x={872} y={483}><SchoolIcon /></At>
		<At f={z3} x={1026} y={1120}><SchoolIcon /></At>
		<At f={z10} x={72} y={1056}><SchoolIcon /></At>
		<At f={z9} x={1020} y={490}><TreeIcon /></At>
		<At f={z3} x={1342} y={395}><CockpitIcon /></At>
		<At f={z3} x={1437} y={1038}><PierIcon /></At>
		<MapDot f={z3} x={456} y={385} />
		<MapDot f={z3} x={342} y={1183} />

		{bubbles.map(b => (
			<circle key={b.lines.join()} cx={b.x} cy={b.y} r={b.r} fill="#00a0dc" fillOpacity="0.82" />
		))}
		{bubbles.map(b =>
			b.lines.map((line, i) => (
				<BubbleText key={line + b.x} x={b.x} y={b.y + 5 + (b.dy ?? 0) + (i - (b.lines.length - 1) / 2) * 18}>
					{line}
				</BubbleText>
			)),
		)}
	</MapSvg>
)

const areaRows = ['全エリア', '豊洲1丁目エリア', '豊洲運河沿いエリア1', '豊洲運河沿いエリア2', '豊洲3丁目エリア', '豊洲駅北エリア', '豊洲2丁目エリア']

const flowRows = [
	['前日比', '+140%'],
	['前週比', '+120%'],
	['前月比', '+106%'],
	['昨年比', '+160%'],
]
const wordRows = [
	['豊洲花火大会', '+140%'],
	['豊洲センタービル', '+100%'],
	['セール', '+100%'],
	['豊洲公園', '+50%'],
	['コロナ', '+10%'],
]
const homeRows = [
	['千代田区', '+140%'],
	['世田谷区', '+140%'],
	['渋谷区', '+140%'],
	['目黒区', '+140%'],
	['新宿区', '+140%'],
]
const attrRows = [
	['勤務・居住者', '+90%'],
	['来訪者', '+80%'],
	['居住者', '+50%'],
	['通過者', '+20%'],
	['勤務者', '+10%'],
]
const timeRows = [
	['0:00-3:59', '+20%'],
	['4:00-7:59', '+140%'],
	['8:00-11:59', '+260%'],
	['12:00-15:59', '+100%'],
	['16:00-19:59', '+70%'],
	['20:00-23:59', '+80%'],
]

const Cards: FC<{ rows: string[][]; tone?: 'word' }> = ({ rows, tone }) => (
	<>
		{rows.map(([name, value]) => (
			<Card key={name} $tone={tone}>
				<CardName>{name}</CardName>
				<CardValue>{value}</CardValue>
			</Card>
		))}
	</>
)

export default function App() {
	return (
		<Page>
			<GlobalStyle />
			<Header>
				<LogoMark viewBox="0 0 41 42">
					<rect width="41" height="42" rx="9" fill="#fff" />
					<path fillRule="evenodd" d="M8 12 H26 L32 17 V31 H8 Z M14 17.5 H23.5 L26.5 20 V25.5 H14 Z" fill="#0f2f63" />
				</LogoMark>
				<LogoText>clarea</LogoText>
				<UserMenu>
					datafluct001
					<Caret $color="#fff" />
				</UserMenu>
			</Header>
			<Body>
				<Sidebar>
					<SideItem>
						<SideIcon>
							<svg width="38" height="38" viewBox="0 0 40 40">
								<circle cx="20" cy="20" r="17.6" fill="none" stroke="#9a9a9a" strokeWidth="4" />
								<circle cx="15" cy="15.5" r="3.4" fill="none" stroke="#9a9a9a" strokeWidth="2.2" />
								<circle cx="27.5" cy="17" r="3.4" fill="#9a9a9a" />
								<path d="M8 27 C10 22.5 15 21.5 19 23.5" fill="none" stroke="#9a9a9a" strokeWidth="2.2" />
								<path d="M14 37 C14 29 19 24 26 24 C30 24 34 23.5 38 22 A18 18 0 0 1 14 37 Z" fill="#9a9a9a" />
							</svg>
						</SideIcon>
						<SideLabel>人流分析</SideLabel>
					</SideItem>
					<SideItem>
						<SideIcon>
							<svg width="34" height="40" viewBox="0 0 34 40" fill="#9a9a9a">
								<ellipse cx="7.3" cy="9" rx="5.8" ry="8.3" transform="rotate(-10 7.3 9)" />
								<path d="M4.5 20.5 L15 20 C15.5 23.5 13 25 10 25 C7 25 5 23.5 4.5 20.5 Z" />
								<ellipse cx="26" cy="24.5" rx="5.8" ry="8.3" transform="rotate(10 26 24.5)" />
								<path d="M18.5 35.5 L29 36 C28.5 38.5 26 40 23 40 C20 40 18 38.5 18.5 35.5 Z" />
							</svg>
						</SideIcon>
						<SideLabel>回遊分析</SideLabel>
					</SideItem>
					<SideItem $active>
						<SideIcon>
							<svg width="28" height="38" viewBox="0 0 28 38" fill={BLUE}>
								<path d="M14 0 A13.7 13.7 0 0 0 0.3 13.7 C0.3 18.5 3.2 21.5 6 24.5 C7.2 25.8 7.8 27.2 7.8 29 V31.5 H20.2 V29 C20.2 27.2 20.8 25.8 22 24.5 C24.8 21.5 27.7 18.5 27.7 13.7 A13.7 13.7 0 0 0 14 0 Z" />
								<rect x="8" y="34.5" width="12" height="3.5" rx="1" />
							</svg>
						</SideIcon>
						<SideLabel $active>インサイト</SideLabel>
					</SideItem>
				</Sidebar>
				<Main>
					<Toolbar>
						<Filter $w={171}>
							<div>
								<FilterLabel>エリア</FilterLabel>
								<FilterValue>全エリア</FilterValue>
							</div>
							<FilterCaret />
						</Filter>
						<Filter $w={199}>
							<div>
								<FilterLabel>ターゲット属性</FilterLabel>
								<FilterValue>すべて</FilterValue>
							</div>
							<FilterCaret />
						</Filter>
						<Filter $w={378} $push>
							<div>
								<FilterLabel>期間</FilterLabel>
								<FilterValue>2020年8月12日-2020年8月18日</FilterValue>
							</div>
							<FilterCaret />
						</Filter>
					</Toolbar>
					<MapArea>
						<AreaMap />
						<AreaPanel>
							<PanelTabs>
								<PanelTab $active>エリア</PanelTab>
								<PanelTab>施設</PanelTab>
							</PanelTabs>
							<AreaList>
								{areaRows.map((name, i) => (
									<AreaRow key={name}>
										<AreaName>{name}</AreaName>
										<AreaCount>12,243人</AreaCount>
										<AreaChevron>
											{i > 0 && (
												<svg width="11" height="19" viewBox="0 0 11 19">
													<path d="M1.5 1.5 L9.5 9.5 L1.5 17.5" fill="none" stroke="#999" strokeWidth="1.8" />
												</svg>
											)}
										</AreaChevron>
									</AreaRow>
								))}
								<ScrollThumb />
							</AreaList>
						</AreaPanel>
					</MapArea>
					<Content>
						<PanelTitle>インサイト分析</PanelTitle>
						<TabBar>
							<ViewTab $active>総合</ViewTab>
							<ViewTab>イベント</ViewTab>
						</TabBar>
						<ActionRow>
							<OutlineButton>
								<svg width="22" height="17" viewBox="0 0 22 17" fill={CARD_BLUE}>
									<circle cx="1.6" cy="1.6" r="1.6" />
									<circle cx="1.6" cy="8.5" r="1.6" />
									<circle cx="1.6" cy="15.4" r="1.6" />
									<rect x="6" y="0.6" width="16" height="2" />
									<rect x="6" y="7.5" width="16" height="2" />
									<rect x="6" y="14.4" width="16" height="2" />
								</svg>
								項目の変更
							</OutlineButton>
						</ActionRow>
						<Columns>
							<Column>
								<ColumnHead>人流</ColumnHead>
								<Stack>
									<Cards rows={flowRows} />
									<Card $tone="date">
										<CardName $light>{'2020年8月12日\n-2020年8月18日'}</CardName>
										<CardValue $light>+440%</CardValue>
									</Card>
									<AddButton>カスタム</AddButton>
								</Stack>
							</Column>
							<Column>
								<ColumnHead>ワード</ColumnHead>
								<Stack>
									<Cards rows={wordRows} tone="word" />
									<AddButton>ワードを追加</AddButton>
								</Stack>
							</Column>
							<Column $narrow>
								<ColumnHead>
									居住地
									<HeadSelect>
										東京23区
										<Caret $color="#fff" />
									</HeadSelect>
								</ColumnHead>
								<Stack>
									<Cards rows={homeRows} />
								</Stack>
							</Column>
							<Column>
								<ColumnHead>属性</ColumnHead>
								<Stack>
									<Cards rows={attrRows} />
								</Stack>
							</Column>
							<Column>
								<ColumnHead>時間帯</ColumnHead>
								<Stack>
									<Cards rows={timeRows} />
								</Stack>
							</Column>
						</Columns>
					</Content>
				</Main>
			</Body>
		</Page>
	)
}
